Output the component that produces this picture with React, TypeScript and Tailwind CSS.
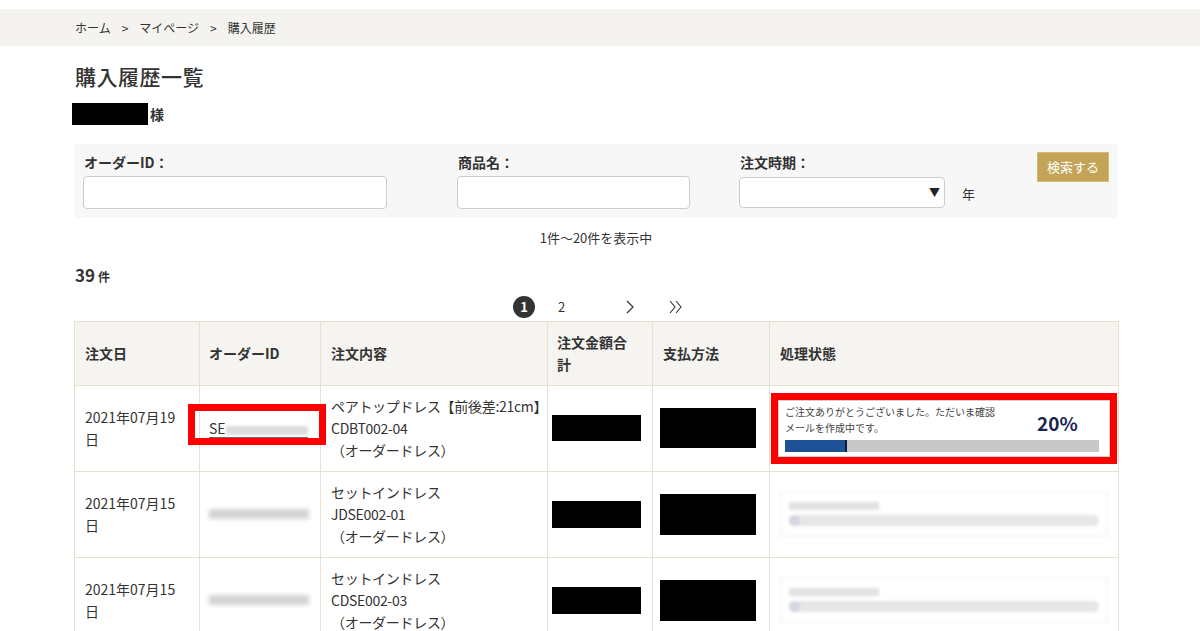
import React from "react";

const F = { fontFamily: '"Noto Sans CJK JP", "Noto Sans", sans-serif' };

function BlurStatus() {
  return (
    <div className="ml-[10px] mr-[10px] h-[46px] border border-[#e6e6e6] bg-white px-[8px] pt-[10px] opacity-70 blur-[1.5px]">
      <div className="h-[8px] w-[90px] bg-[#d6d6d6]" />
      <div className="mt-[5px] flex h-[11px] items-center rounded-full bg-[#dcdcdc]">
        <div className="h-[11px] w-[11px] rounded-full bg-[#c2c6d4]" />
      </div>
    </div>
  );
}

function Row({
  date,
  idCell,
  lines,
  amtH,
  payH,
  status,
}: {
  date: string;
  idCell: React.ReactNode;
  lines: string[];
  amtH: number;
  payH: number;
  status: React.ReactNode;
}) {
  return (
    <tr className="h-[86px]">
      <td className="border border-[#e8e1cd] px-[10px] align-middle text-[14px] leading-[22px]">
        {date}
        <br />日
      </td>
      <td className="border border-[#e8e1cd] px-[9px] align-middle">{idCell}</td>
      <td className="border border-[#e8e1cd] px-[10px] align-middle text-[14px] leading-[22px] tracking-[-0.3px]">
        {lines.map((l, i) => (
          <div key={i} className="whitespace-nowrap">
            {l}
          </div>
        ))}
      </td>
      <td className="border border-[#e8e1cd] pl-[4px] align-middle">
        <div className="w-[89px] bg-black" style={{ height: amtH }} />
      </td>
      <td className="border border-[#e8e1cd] pl-[7px] align-middle">
        <div className="w-[96px] bg-black" style={{ height: payH }} />
      </td>
      <td className="relative border border-[#e8e1cd] p-0 align-middle">{status}</td>
    </tr>
  );
}

export default function App() {
  return (
    <div className="min-h-[631px] bg-white text-[#333]" style={F}>
      <div className="h-[9px]" />
      <div className="flex h-[37px] items-center bg-[#f4f3ef] pl-[75px] text-[12px] text-[#333]">
        <span>ホーム</span>
        <span className="mx-[11px]">&gt;</span>
        <span>マイページ</span>
        <span className="mx-[11px]">&gt;</span>
        <span>購入履歴</span>
      </div>

      <div className="ml-[74px] w-[1044px]">
        <h1 className="mt-[15px] pl-[1px] text-[21px] font-medium leading-[30px] tracking-[0.5px]">購入履歴一覧</h1>
        <div className="mt-[12px] flex items-center">
          <div className="-ml-[2px] h-[22px] w-[76px] bg-black" />
          <span className="ml-[2px] text-[14px] font-bold">様</span>
        </div>

        <div className="mt-[19px] flex h-[74px] bg-[#f7f7f7] pl-[9px] pr-[9px] pt-[9px]">
          <div className="w-[304px] shrink-0">
            <div className="pl-[1px] text-[14px] font-bold leading-[18px]">オーダーID：</div>
            <div className="mt-[5px] h-[33px] rounded-[4px] border border-[#ccc] bg-white" />
          </div>
          <div className="ml-[70px] w-[233px] shrink-0">
            <div className="pl-[1px] text-[14px] font-bold leading-[18px]">商品名：</div>
            <div className="mt-[5px] h-[33px] rounded-[4px] border border-[#ccc] bg-white" />
          </div>
          <div className="ml-[49px] shrink-0">
            <div className="pl-[1px] text-[14px] font-bold leading-[18px]">注文時期：</div>
            <div className="mt-[6px] flex items-center">
              <div className="relative h-[31px] w-[206px] rounded-[4px] border border-[#ccc] bg-white">
                <span className="absolute right-[4px] top-[7px] text-[11px] leading-[14px] text-[#222]">▼</span>
              </div>
              <span className="ml-[17px] mt-[2px] text-[13px]">年</span>
            </div>
          </div>
          <div className="ml-auto mt-[-1px] shrink-0">
            <div className="flex h-[30px] w-[72px] items-center justify-center border border-[#d4bb78] bg-[#c3a457] text-[13px] text-white">
              検索する
            </div>
          </div>
        </div>

        <div className="mt-[10px] text-center text-[13px] leading-[20px]">1件～20件を表示中</div>

        <div className="mt-[14px] flex items-baseline pl-[1px]">
          <span className="text-[17px] font-bold">39</span>
          <span className="ml-[3px] text-[12px] font-bold">件</span>
        </div>

        <div className="mt-[7px] flex h-[24px] items-center pl-[439px] text-[13px]">
          <div className="flex h-[22px] w-[22px] items-center justify-center rounded-full bg-[#333] text-[13px] font-bold text-white">
            1
          </div>
          <span className="ml-[23px]">2</span>
          <svg className="ml-[60px]" width="10" height="14" viewBox="0 0 10 14">
            <polyline points="2,1 8,7 2,13" fill="none" stroke="#333" strokeWidth="1.2" />
          </svg>
          <svg className="ml-[34px]" width="14" height="14" viewBox="0 0 14 14">
            <polyline points="1,1 6,7 1,13" fill="none" stroke="#333" strokeWidth="1.1" />
            <polyline points="7,1 12,7 7,13" fill="none" stroke="#333" strokeWidth="1.1" />
          </svg>
        </div>

        <table className="mt-[2px] w-[1044px] table-fixed border-collapse border border-[#e8e1cd]">
          <colgroup>
            <col className="w-[125px]" />
            <col className="w-[121px]" />
            <col className="w-[227px]" />
            <col className="w-[105px]" />
            <col className="w-[117px]" />
            <col className="w-[349px]" />
          </colgroup>
          <thead>
            <tr className="h-[64px] bg-[#f5f4f0] text-left text-[14px] font-bold leading-[22px]">
              <th className="border border-[#e8e1cd] px-[10px] font-bold">注文日</th>
              <th className="border border-[#e8e1cd] px-[9px] font-bold">オーダーID</th>
              <th className="border border-[#e8e1cd] px-[10px] font-bold">注文内容</th>
              <th className="border border-[#e8e1cd] px-[9px] font-bold">
                注文金額合
                <br />計
              </th>
              <th className="border border-[#e8e1cd] px-[10px] font-bold">支払方法</th>
              <th className="border border-[#e8e1cd] px-[10px] font-bold">処理状態</th>
            </tr>
          </thead>
          <tbody>
            <Row
              date="2021年07月19"
              idCell={
                <div className="relative">
                  <div className="flex h-[20px] items-end">
                    <span className="border-b border-[#666] pb-[1px] text-[14px] leading-[16px]">
                      SE
                      <span className="inline-block h-[9px] w-[82px] bg-[#ddd] align-middle blur-[1.5px]" />
                    </span>
                  </div>
                  <div className="absolute -left-[21px] -top-[14px] h-[41px] w-[138px] border-[7px] border-[#ff0000]" />
                </div>
              }
              lines={["ペアトップドレス【前後差:21cm】", "CDBT002-04", "（オーダードレス）"]}
              amtH={26}
              payH={40}
              status={
                <div className="mx-[1px] border-[7px] border-[#ff0000] bg-white p-0">
                  <div className="relative h-[57px] border border-[#cfcfcf] px-[6px] pt-[3px]">
                    <div className="text-[10px] leading-[16px] text-[#444]">
                      ご注文ありがとうございました。ただいま確認
                      <br />
                      メールを作成中です。
                    </div>
                    <div className="absolute left-[258px] top-[10px] text-[19px] font-bold leading-[24px] text-[#1b2552]">
                      20%
                    </div>
                    <div className="mt-[4px] flex h-[12px] w-[314px] bg-[#c8c8c8]">
                      <div className="h-[12px] w-[62px] border-r-2 border-[#0f1a3c] bg-[#1f5197]" />
                    </div>
                  </div>
                </div>
              }
            />
            <Row
              date="2021年07月15"
              idCell={<div className="h-[10px] w-[100px] bg-[#d4d4d4] blur-[2px]" />}
              lines={["セットインドレス", "JDSE002-01", "（オーダードレス）"]}
              amtH={27}
              payH={41}
              status={<BlurStatus />}
            />
            <Row
              date="2021年07月15"
              idCell={<div className="h-[10px] w-[100px] bg-[#d4d4d4] blur-[2px]" />}
              lines={["セットインドレス", "CDSE002-03", "（オーダードレス）"]}
              amtH={27}
              payH={41}
              status={<BlurStatus />}
            />
          </tbody>
        </table>
      </div>
    </div>
  );
}
